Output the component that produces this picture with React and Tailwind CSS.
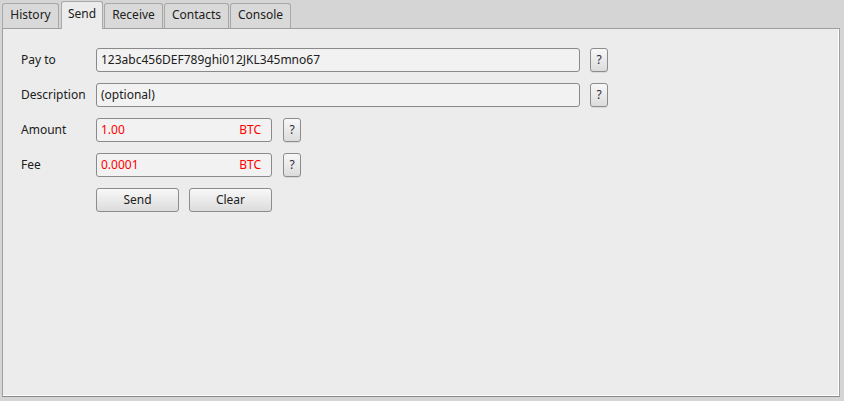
import { useState } from "react";

const tabs = [
  { name: "History", w: "w-[57px]", ml: "ml-0" },
  { name: "Send", w: "w-[42px]", ml: "ml-[2px]" },
  { name: "Receive", w: "w-[59px]", ml: "ml-[1px]" },
  { name: "Contacts", w: "w-[65px]", ml: "ml-[1px]" },
  { name: "Console", w: "w-[61px]", ml: "ml-[1px]" },
];

function HelpButton() {
  return (
    <button className="flex h-[24px] w-[18px] items-center justify-center rounded-[3px] border border-[#8c8c8c] bg-gradient-to-b from-[#f8f8f8] to-[#dcdcdc] text-[12px] text-[#2a2a3a] shadow-[0_1px_0_rgba(0,0,0,0.08)]">
      ?
    </button>
  );
}

function Field({ label, children }) {
  return (
    <div className="flex h-[24px] items-center">
      <span className="w-[75px] text-[12px] text-[#202020]">{label}</span>
      {children}
    </div>
  );
}

export default function App() {
  const [active, setActive] = useState("Send");

  return (
    <div className="h-[401px] w-[844px] bg-[#d5d5d5] px-[2px] font-['Noto_Sans',sans-serif]">
      <div className="flex h-[28px] items-end">
        {tabs.map((tab) => {
          const selected = tab.name === active;
          return (
            <button
              key={tab.name}
              onClick={() => setActive(tab.name)}
              className={
                selected
                  ? `relative z-10 -mb-px h-[28px] ${tab.w} ${tab.ml} rounded-t-[3px] border border-b-0 border-[#a8a8a8] bg-[#ececec] pb-[4px] text-[12px] text-[#202020]`
                  : `h-[25px] ${tab.w} ${tab.ml} rounded-t-[3px] border border-b-0 border-[#a8a8a8] bg-[#d9d9d9] pb-[2px] text-[12px] text-[#202020]`
              }
            >
              {tab.name}
            </button>
          );
        })}
      </div>
      <div className="h-[369px] w-[838px] border border-[#a0a0a0] border-b-[#8a8a8a] bg-[#ececec] shadow-[inset_-1px_-1px_0_#ffffff]">
        <div className="flex flex-col gap-[11px] pl-[18px] pt-[19px]">
          <Field label="Pay to">
            <div className="flex h-[24px] w-[484px] items-center rounded-[3px] border border-[#8a8a8a] bg-[#f2f2f2] px-[4px] text-[12px] text-[#202020]">
              123abc456DEF789ghi012JKL345mno67
            </div>
            <div className="ml-[10px]">
              <HelpButton />
            </div>
          </Field>
          <Field label="Description">
            <div className="flex h-[24px] w-[484px] items-center rounded-[3px] border border-[#8a8a8a] bg-[#f2f2f2] px-[4px] text-[12px] text-[#202020]">
              (optional)
            </div>
            <div className="ml-[10px]">
              <HelpButton />
            </div>
          </Field>
          <Field label="Amount">
            <div className="flex h-[24px] w-[176px] items-center justify-between rounded-[3px] border border-[#8a8a8a] bg-[#f2f2f2] px-[4px] pr-[10px] text-[12px] text-[#ff0000]">
              <span>1.00</span>
              <span>BTC</span>
            </div>
            <div className="ml-[11px]">
              <HelpButton />
            </div>
          </Field>
          <Field label="Fee">
            <div className="flex h-[24px] w-[176px] items-center justify-between rounded-[3px] border border-[#8a8a8a] bg-[#f2f2f2] px-[4px] pr-[10px] text-[12px] text-[#ff0000]">
              <span>0.0001</span>
              <span>BTC</span>
            </div>
            <div className="ml-[11px]">
              <HelpButton />
            </div>
          </Field>
          <div className="flex gap-[10px] pl-[75px]">
            <button className="h-[24px] w-[83px] rounded-[3px] border border-[#8c8c8c] bg-gradient-to-b from-[#f8f8f8] to-[#dcdcdc] text-[12px] text-[#202020]">
              Send
            </button>
            <button className="h-[24px] w-[83px] rounded-[3px] border border-[#8c8c8c] bg-gradient-to-b from-[#f8f8f8] to-[#dcdcdc] text-[12px] text-[#202020]">
              Clear
            </button>
          </div>
        </div>
      </div>
    </div>
  );
}
